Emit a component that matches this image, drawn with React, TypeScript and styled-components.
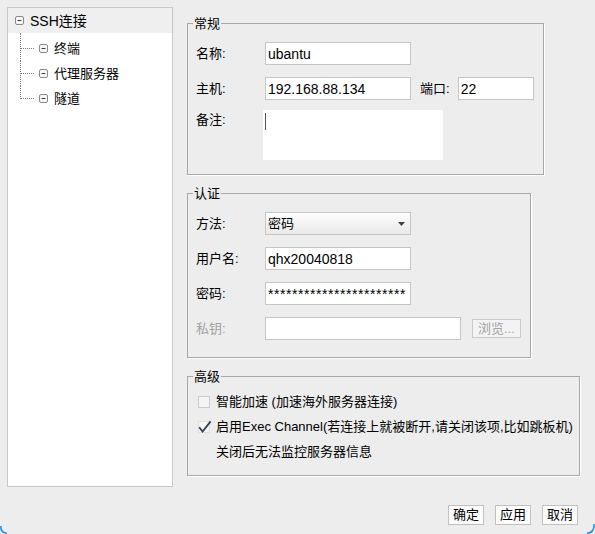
import React from "react";
import styled, { createGlobalStyle } from "styled-components";

const FONT = `"Liberation Sans", "Noto Sans CJK SC", sans-serif`;

const Global = createGlobalStyle`
  html, body { margin: 0; padding: 0; background: #ededed; }
  body { font-family: ${FONT}; font-size: 13px; color: #000; }
  *, *::before, *::after { box-sizing: border-box; }
`;

const Dialog = styled.div`
  position: relative;
  width: 595px;
  height: 534px;
  overflow: hidden;
  background: #ededed;
  padding: 7px 17px 0 7px;
  display: flex;
  flex-direction: column;
`;

const Main = styled.div`
  display: flex;
  align-items: flex-start;
  gap: 14px;
`;

/* ---------- tree ---------- */
const TreePanel = styled.div`
  width: 166px;
  height: 480px;
  flex: none;
  background: #fff;
  border: 1px solid #c8c8c8;
`;

const TreeRootRow = styled.div`
  height: 25px;
  display: flex;
  align-items: center;
  gap: 6px;
  padding-left: 7px;
  background: #efefef;
  line-height: 18px;
  font-size: 14px;
`;

const TreeChildren = styled.div`
  padding-top: 3px;
`;

const TreeChildRow = styled.div`
  height: 25px;
  display: flex;
  align-items: center;
  padding-left: 12px;
  line-height: 18px;
`;

const Branch = styled.span<{ $first?: boolean; $last?: boolean }>`
  position: relative;
  width: 14px;
  align-self: stretch;
  flex: none;
  margin-right: 5px;
  &::before {
    content: "";
    position: absolute;
    left: 0;
    top: ${(p) => (p.$first ? "-3px" : "0")};
    bottom: ${(p) => (p.$last ? "12px" : "0")};
    border-left: 1px dotted #7c7c7c;
  }
  &::after {
    content: "";
    position: absolute;
    left: 1px;
    right: 0;
    top: 12px;
    border-top: 1px dotted #7c7c7c;
  }
`;

const TreeText = styled.span`
  margin-left: 6px;
`;

const MinusBox = () => (
  <svg width="9" height="9" viewBox="0 0 9 9" style={{ flex: "none" }}>
    <rect x="0.5" y="0.5" width="8" height="8" rx="1.5" fill="#f7f7f7" stroke="#8a8a8a" />
    <line x1="2.5" y1="4.5" x2="6.5" y2="4.5" stroke="#404040" />
  </svg>
);

/* ---------- right side ---------- */
const RightCol = styled.div`
  display: flex;
  flex-direction: column;
  gap: 10px;
  margin-top: 8px;
`;

const Group = styled.fieldset<{ $w: number; $pt: number; $pb: number }>`
  width: ${(p) => p.$w}px;
  min-width: 0;
  margin: 0;
  border: 1px solid #a8a8a8;
  padding: ${(p) => p.$pt}px 8px ${(p) => p.$pb}px 8px;
  box-shadow: 1px 1px 0 #ffffff;
`;

const Legend = styled.legend`
  padding: 0 1px;
  margin-left: -3px;
  font-size: 13px;
  line-height: 17px;
`;

const Rows = styled.div<{ $gap: number }>`
  display: flex;
  flex-direction: column;
  gap: ${(p) => p.$gap}px;
`;

const Row = styled.div<{ $h?: number; $top?: boolean; $mt?: number }>`
  display: flex;
  align-items: ${(p) => (p.$top ? "flex-start" : "center")};
  height: ${(p) => p.$h ?? 23}px;
  margin-top: ${(p) => p.$mt ?? 0}px;
`;

const Label = styled.span<{ $w?: number; $muted?: boolean; $ml?: number }>`
  width: ${(p) => (p.$w ? `${p.$w}px` : "auto")};
  flex: none;
  margin-left: ${(p) => p.$ml ?? 0}px;
  line-height: 20px;
  white-space: nowrap;
  color: ${(p) => (p.$muted ? "#a3a3a3" : "#000")};
`;

const TextInput = styled.input<{ $w: number; $ml?: number; $spacing?: number }>`
  width: ${(p) => p.$w}px;
  height: 23px;
  flex: none;
  margin: 0 0 0 ${(p) => p.$ml ?? 0}px;
  padding: 0 2px;
  border: 1px solid #c6c6c6;
  border-radius: 0;
  background: #fff;
  font-family: ${FONT};
  font-size: 14px;
  letter-spacing: ${(p) => p.$spacing ?? 0}px;
  color: #000;
  outline: none;
`;

const NoteBox = styled.div`
  width: 180px;
  height: 50px;
  flex: none;
  background: #fff;
  padding: 3px 2px;
`;

const Caret = styled.span`
  display: block;
  width: 1px;
  height: 17px;
  background: #555;
`;

const Select = styled.div`
  width: 146px;
  height: 23px;
  flex: none;
  display: flex;
  align-items: center;
  justify-content: space-between;
  padding: 0 5px 0 2px;
  border: 1px solid #c6c6c6;
  background: linear-gradient(#fdfdfd, #e9e9e9);
  line-height: 18px;
`;

const ArrowDown = () => (
  <svg width="7" height="4" viewBox="0 0 7 4">
    <polygon points="0,0 7,0 3.5,4" fill="#404040" />
  </svg>
);

const BrowseButton = styled.button`
  width: 49px;
  height: 19px;
  flex: none;
  margin-left: 11px;
  padding: 0;
  border: 1px solid #cacaca;
  background: #f3f3f3;
  font-family: ${FONT};
  font-size: 13px;
  line-height: 17px;
  color: #a3a3a3;
`;

const CheckRow = styled.div<{ $indent?: boolean }>`
  display: flex;
  align-items: center;
  gap: 6px;
  height: 22px;
  padding-left: ${(p) => (p.$indent ? 20 : 2)}px;
  line-height: 20px;
  white-space: nowrap;
`;

const Check = ({ checked }: { checked?: boolean }) => (
  <svg width="14" height="14" viewBox="0 0 14 14" style={{ flex: "none", marginRight: -2 }}>
    <rect x="0.5" y="1.5" width="11" height="11" fill="#f4f4f4" stroke={checked ? "#dedede" : "#cbcbcb"} />
    {checked && (
      <path d="M1.2 7.2 L4.6 11.6 L12.6 1.4" fill="none" stroke="#2f4155" strokeWidth="1.8" strokeLinejoin="miter" />
    )}
  </svg>
);

/* ---------- footer ---------- */
const Footer = styled.div`
  display: flex;
  justify-content: flex-end;
  gap: 11px;
  margin-top: 18px;
`;

const Button = styled.button`
  width: 36px;
  height: 20px;
  padding: 0;
  border: 1px solid #c0c0c0;
  background: #fcfcfc;
  font-family: ${FONT};
  font-size: 13px;
  line-height: 18px;
  color: #000;
`;

const Corner = styled.svg<{ $side: "left" | "right" }>`
  position: absolute;
  bottom: 0;
  ${(p) => (p.$side === "left" ? "left: 0;" : "right: 0;")}
`;

export default function App() {
  return (
    <>
      <Global />
      <Dialog>
        <Main>
          <TreePanel>
            <TreeRootRow>
              <MinusBox />
              <span>SSH连接</span>
            </TreeRootRow>
            <TreeChildren>
              {["终端", "代理服务器", "隧道"].map((t, i, a) => (
                <TreeChildRow key={t}>
                  <Branch $first={i === 0} $last={i === a.length - 1} />
                  <MinusBox />
                  <TreeText>{t}</TreeText>
                </TreeChildRow>
              ))}
            </TreeChildren>
          </TreePanel>

          <RightCol>
            <Group $w={357} $pt={10} $pb={14}>
              <Legend>常规</Legend>
              <Rows $gap={12}>
                <Row>
                  <Label $w={69}>名称:</Label>
                  <TextInput $w={146} readOnly spellCheck={false} defaultValue="ubantu" />
                </Row>
                <Row>
                  <Label $w={69}>主机:</Label>
                  <TextInput $w={146} readOnly spellCheck={false} defaultValue="192.168.88.134" />
                  <Label $ml={9}>端口:</Label>
                  <TextInput $w={76} $ml={8} readOnly spellCheck={false} defaultValue="22" />
                </Row>
                <Row $h={50} $top $mt={-2}>
                  <Label $w={67}>备注:</Label>
                  <NoteBox>
                    <Caret />
                  </NoteBox>
                </Row>
              </Rows>
            </Group>

            <Group $w={344} $pt={10} $pb={17}>
              <Legend>认证</Legend>
              <Rows $gap={12}>
                <Row>
                  <Label $w={69}>方法:</Label>
                  <Select>
                    <span>密码</span>
                    <ArrowDown />
                  </Select>
                </Row>
                <Row>
                  <Label $w={69}>用户名:</Label>
                  <TextInput $w={146} readOnly spellCheck={false} defaultValue="qhx20040818" />
                </Row>
                <Row>
                  <Label $w={69}>密码:</Label>
                  <TextInput
                    $w={146}
                    $spacing={0.55}
                    readOnly
                    spellCheck={false}
                    defaultValue="***********************"
                  />
                </Row>
                <Row>
                  <Label $w={69} $muted>私钥:</Label>
                  <TextInput $w={196} readOnly spellCheck={false} defaultValue="" />
                  <BrowseButton>浏览...</BrowseButton>
                </Row>
              </Rows>
            </Group>

            <Group $w={393} $pt={6} $pb={12}>
              <Legend>高级</Legend>
              <Rows $gap={3}>
                <CheckRow>
                  <Check />
                  <span>智能加速 (加速海外服务器连接)</span>
                </CheckRow>
                <CheckRow>
                  <Check checked />
                  <span>启用Exec Channel(若连接上就被断开,请关闭该项,比如跳板机)</span>
                </CheckRow>
                <CheckRow $indent>
                  <span>关闭后无法监控服务器信息</span>
                </CheckRow>
              </Rows>
            </Group>
          </RightCol>
        </Main>

        <Footer>
          <Button>确定</Button>
          <Button>应用</Button>
          <Button>取消</Button>
        </Footer>

        <Corner $side="left" width="7" height="8" viewBox="0 0 7 8">
          <path d="M0.8 0 Q0.8 7.2 7 7.2" fill="none" stroke="#2b8be6" strokeWidth="1.6" />
        </Corner>
        <Corner $side="right" width="8" height="10" viewBox="0 0 8 10">
          <path d="M0 9.2 Q7.2 9.2 7.2 0" fill="none" stroke="#2b8be6" strokeWidth="1.6" />
        </Corner>
      </Dialog>
    </>
  );
}
